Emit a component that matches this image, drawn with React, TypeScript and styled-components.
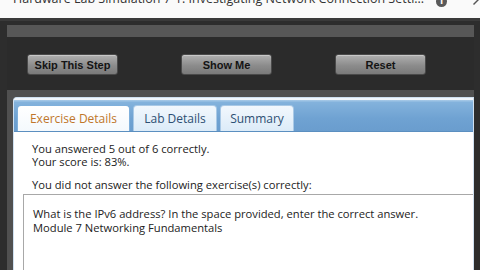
import React from 'react';
import styled, { createGlobalStyle } from 'styled-components';

const GlobalStyle = createGlobalStyle`
	html, body {
		margin: 0;
		padding: 0;
		background: #2e2e2e;
	}
`;

type TabProps = { active?: boolean; w: number };

const tabs = [
	{ label: 'Exercise Details', w: 113 },
	{ label: 'Lab Details', w: 84 },
	{ label: 'Summary', w: 74 },
];

const App: React.FC = () => {
	return (
		<>
			<GlobalStyle />
			<Page>
				<TitleBar>
					<TitleText>
						Hardware Lab Simulation 7-1: Investigating Network Connection Setti...
					</TitleText>
					<TitleIcons>
						<InfoIcon>i</InfoIcon>
						<svg width='10' height='10' viewBox='0 0 10 10'>
							<path d='M2 9 L7 4 L9 2 L10 0 L8 1 L6 3 L1 8 Z' fill='#555' />
						</svg>
					</TitleIcons>
				</TitleBar>
				<Frame>
					<TopStrip />
					<ButtonRow>
						<LabButton>Skip This Step</LabButton>
						<LabButton>Show Me</LabButton>
						<LabButton>Reset</LabButton>
					</ButtonRow>
					<PanelWell>
						<Panel>
							<TabStrip>
								{tabs.map((t, i) => (
									<Tab key={t.label} active={i === 0} w={t.w}>
										{t.label}
									</Tab>
								))}
							</TabStrip>
							<PanelBody>
								<Summary>
									You answered 5 out of 6 correctly.
									<br />
									Your score is: 83%.
								</Summary>
								<Summary>You did not answer the following exercise(s) correctly:</Summary>
								<MissedBox>
									<MissedText>
										What is the IPv6 address? In the space provided, enter the correct answer.
										<br />
										Module 7 Networking Fundamentals
									</MissedText>
								</MissedBox>
							</PanelBody>
						</Panel>
					</PanelWell>
				</Frame>
			</Page>
		</>
	);
};

const Page = styled.div`
	width: 480px;
	height: 270px;
	overflow: hidden;
	display: flex;
	flex-direction: column;
	background: #2e2e2e;
`;

const TitleBar = styled.div`
	height: 18px;
	flex: none;
	background: #fafafa;
	display: flex;
	align-items: flex-start;
	overflow: hidden;
	padding-left: 13px;
`;

const TitleText = styled.div`
	flex: none;
	width: 418px;
	overflow: hidden;
	font-family: 'Open Sans', sans-serif;
	font-size: 12.5px;
	color: #333;
	white-space: nowrap;
	margin-top: -10px;
	line-height: 18px;
`;

const TitleIcons = styled.div`
	display: flex;
	align-items: flex-start;
	gap: 25px;
	margin-top: -4px;
	margin-left: 5px;
`;

const InfoIcon = styled.div`
	width: 11px;
	height: 11px;
	border-radius: 50%;
	background: #5a5a5a;
	color: #fff;
	font-family: 'DejaVu Sans', sans-serif;
	font-weight: bold;
	font-size: 8px;
	line-height: 11px;
	text-align: center;
`;

const Frame = styled.div`
	flex: 1;
	display: flex;
	flex-direction: column;
	border-top: 3px solid #3a3a3a;
	padding: 4px 6px 0 7px;
	background: #2d2d2d;
	min-height: 0;
`;

const TopStrip = styled.div`
	height: 12px;
	background: #575757;
	flex: none;
`;

const ButtonRow = styled.div`
	height: 53px;
	flex: none;
	display: flex;
	align-items: center;
	justify-content: space-between;
	padding: 0 48px 0 20px;
	background: #2b2b2b;
`;

const LabButton = styled.button`
	width: 91px;
	height: 21px;
	margin-top: 2px;
	border: 1px solid #4a4a4a;
	border-radius: 3px;
	background: linear-gradient(#b0b0b0, #8c8c8c 55%, #7a7a7a);
	box-shadow: inset 0 1px 0 #c8c8c8;
	font-family: 'Liberation Sans', Arial, sans-serif;
	font-weight: bold;
	font-size: 11px;
	color: #141414;
	padding: 0;
	cursor: pointer;
`;

const PanelWell = styled.div`
	flex: 1;
	background: #505050;
	padding: 7px 0 0 6px;
	min-height: 0;
	display: flex;
`;

const Panel = styled.div`
	flex: 1;
	background: #fff;
	border: 1px solid #cfe0f0;
	border-bottom: none;
	border-radius: 4px 0 0 0;
	display: flex;
	flex-direction: column;
	overflow: hidden;
`;

const TabStrip = styled.div`
	height: 31px;
	flex: none;
	display: flex;
	align-items: flex-end;
	gap: 3px;
	padding-left: 3px;
	background: linear-gradient(#a9cbe8 0, #83b2dc 8%, #6fa2d2 60%, #6a9dce);
	border-top: 2px solid #f2f7fc;
	border-bottom: 1px solid #5b8fc0;
`;

const Tab = styled.div<TabProps>`
	width: ${(p) => p.w}px;
	height: 26px;
	box-sizing: border-box;
	border: 1px solid ${(p) => (p.active ? '#7fb0dc' : '#a9c9e6')};
	border-bottom: none;
	border-radius: 4px 4px 0 0;
	background: ${(p) =>
		p.active ? 'linear-gradient(#ffffff, #f4f9fd)' : 'linear-gradient(#f2f8fd, #dcebf8)'};
	color: ${(p) => (p.active ? '#c0762a' : '#2d4f73')};
	font-family: 'Open Sans', sans-serif;
	font-size: 12px;
	display: flex;
	align-items: center;
	justify-content: center;
`;

const PanelBody = styled.div`
	flex: 1;
	padding: 11px 0 0 18px;
	display: flex;
	flex-direction: column;
	font-family: 'Open Sans', sans-serif;
	font-size: 11.2px;
	color: #222;
`;

const Summary = styled.div`
	line-height: 12.5px;
	margin-bottom: 11px;
`;

const MissedBox = styled.div`
	flex: 1;
	margin: -9px 0 0 -9px;
	border-top: 1px solid #a8a8a8;
	border-left: 1px solid #a8a8a8;
	padding: 12px 0 0 9px;
`;

const MissedText = styled.div`
	line-height: 14px;
`;

export default App;
